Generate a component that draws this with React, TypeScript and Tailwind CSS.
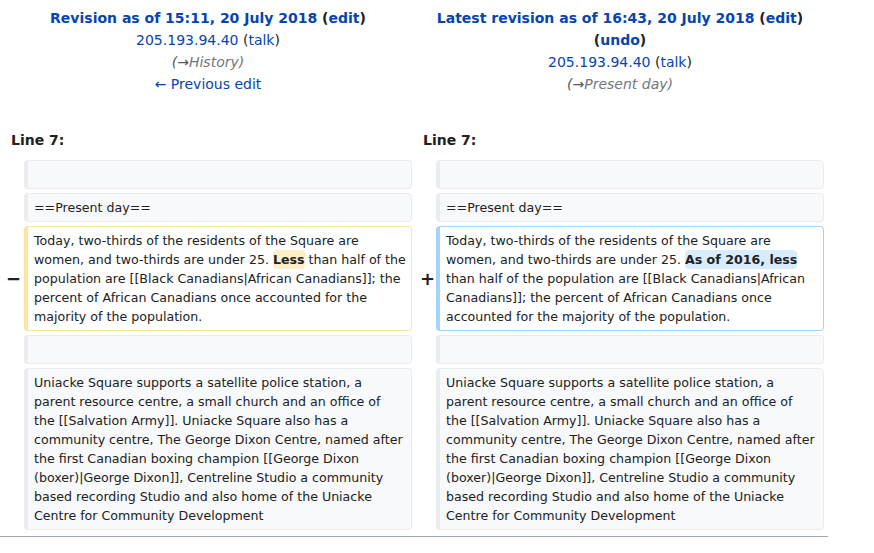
import React from "react";

const link = "text-[#0645ad]";

const Box = ({ kind, children }: { kind: "ctx" | "del" | "add"; children?: React.ReactNode }) => {
    const styles = {
        ctx: "bg-[#f8f9fa] border-[#eaecf0]",
        del: "bg-white border-[#ffe49c]",
        add: "bg-white border-[#a3d3ff]",
    };
    return (
        <div
            className={`min-h-[29px] border border-l-4 rounded-[4px] px-[6px] py-[4px] text-[12.62px] leading-[19px] whitespace-nowrap ${styles[kind]}`}
        >
            {children}
        </div>
    );
};

const Marker = ({ sign, shift = "" }: { sign?: string; shift?: string }) => (
    <div className={`flex items-center justify-end text-[18px] font-bold leading-none text-[#202122] ${shift}`}>
        {sign}
    </div>
);

const Change = ({ children, color }: { children: React.ReactNode; color: string }) => (
    <span className={`font-bold rounded-[4px] py-[2px] ${color}`}>{children}</span>
);

const uniacke = [
    "Uniacke Square supports a satellite police station, a",
    "parent resource centre, a small church and an office of",
    "the [[Salvation Army]]. Uniacke Square also has a",
    "community centre, The George Dixon Centre, named after",
    "the first Canadian boxing champion [[George Dixon",
    "(boxer)|George Dixon]], Centreline Studio a community",
    "based recording Studio and also home of the Uniacke",
    "Centre for Community Development",
];

const App = () => {
    return (
        <div className="w-[828px] font-['DejaVu_Sans',sans-serif] text-[#202122] bg-white">
            <div className="grid grid-cols-[16px_388px_16px_388px] gap-x-1 gap-y-1 px-1">
                {/* headers */}
                <div className="col-span-2 text-center text-[14px] leading-[22px] pt-[7px]">
                    <div className="font-bold">
                        <span className={link}>Revision as of 15:11, 20 July 2018</span> (<span className={link}>edit</span>)
                    </div>
                    <div>
                        <span className={link}>205.193.94.40</span> (<span className={link}>talk</span>)
                    </div>
                    <div className="italic text-[#54595d]">
                        (→<span className="text-[#72777d]">History)</span>
                    </div>
                    <div className={link}>← Previous edit</div>
                </div>
                <div className="col-span-2 text-center text-[14px] leading-[22px] pt-[7px]">
                    <div className="font-bold">
                        <span className={link}>Latest revision as of 16:43, 20 July 2018</span> (<span className={link}>edit</span>)
                    </div>
                    <div className="font-bold">
                        (<span className={link}>undo</span>)
                    </div>
                    <div>
                        <span className={link}>205.193.94.40</span> (<span className={link}>talk</span>)
                    </div>
                    <div className="italic text-[#54595d]">
                        (→<span className="text-[#72777d]">Present day)</span>
                    </div>
                </div>

                {/* line numbers */}
                <div className="col-span-2 pl-[7px] pt-[30px] pb-[5px] text-[14px] leading-[22px] font-bold">Line 7:</div>
                <div className="col-span-2 pl-[7px] pt-[30px] pb-[5px] text-[14px] leading-[22px] font-bold">Line 7:</div>

                <Marker />
                <Box kind="ctx" />
                <Marker />
                <Box kind="ctx" />

                <Marker />
                <Box kind="ctx">==Present day==</Box>
                <Marker />
                <Box kind="ctx">==Present day==</Box>

                <Marker sign="−" shift="-mr-[1px]" />
                <Box kind="del">
                    <div>Today, two-thirds of the residents of the Square are</div>
                    <div>
                        women, and two-thirds are under 25. <Change color="bg-[#feeec8]">Less</Change> than half of the
                    </div>
                    <div>population are [[Black Canadians|African Canadians]]; the</div>
                    <div>percent of African Canadians once accounted for the</div>
                    <div>majority of the population.</div>
                </Box>
                <Marker sign="+" shift="-mr-[3px]" />
                <Box kind="add">
                    <div>Today, two-thirds of the residents of the Square are</div>
                    <div>
                        women, and two-thirds are under 25. <Change color="bg-[#d8ecff]">As of 2016, less</Change>
                    </div>
                    <div>than half of the population are [[Black Canadians|African</div>
                    <div>Canadians]]; the percent of African Canadians once</div>
                    <div>accounted for the majority of the population.</div>
                </Box>

                <Marker />
                <Box kind="ctx" />
                <Marker />
                <Box kind="ctx" />

                <Marker />
                <Box kind="ctx">
                    {uniacke.map((l) => (
                        <div key={l}>{l}</div>
                    ))}
                </Box>
                <Marker />
                <Box kind="ctx">
                    {uniacke.map((l) => (
                        <div key={l}>{l}</div>
                    ))}
                </Box>
            </div>
            <div className="mt-[6px] h-px bg-[#a2a9b1]" />
        </div>
    );
};

export default App;
